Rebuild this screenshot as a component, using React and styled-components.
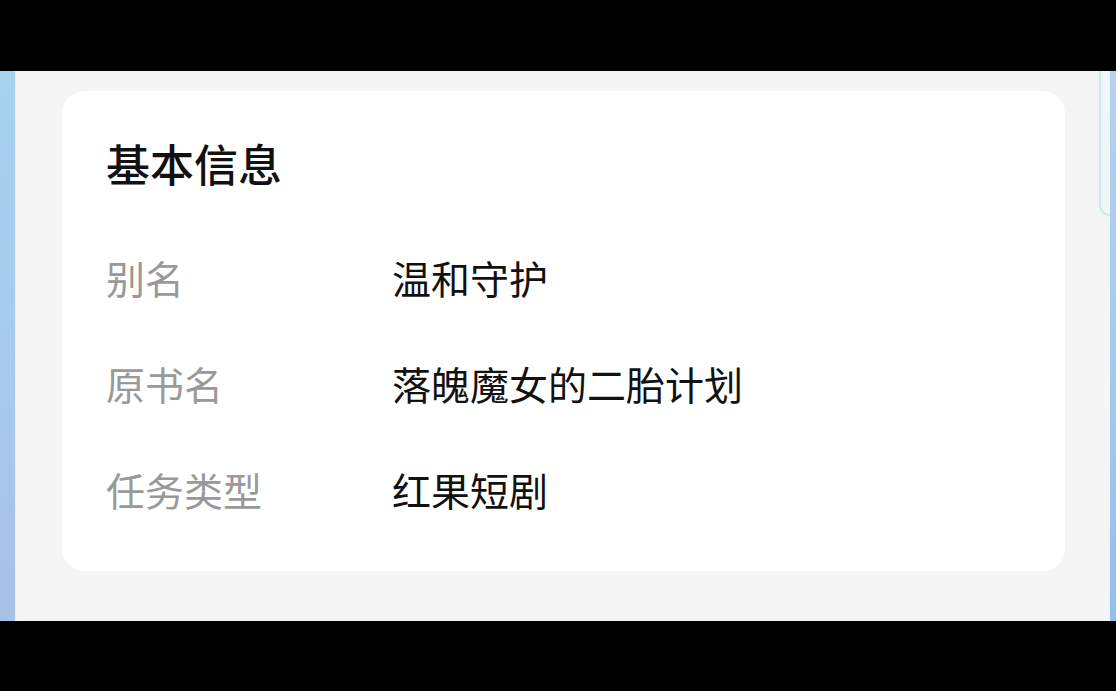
import React from 'react'
import styled, {createGlobalStyle} from 'styled-components'

const GlobalStyle = createGlobalStyle`
  html, body {
    margin: 0;
    padding: 0;
    background: #000;
  }
  body {
    font-family: "Noto Sans CJK SC", "Noto Sans", sans-serif;
  }
`

const rows = [
  {label: '别名', value: '温和守护'},
  {label: '原书名', value: '落魄魔女的二胎计划'},
  {label: '任务类型', value: '红果短剧'}
]

const App = () => {
  return (
    <>
      <GlobalStyle />
      <Frame>
        <Letterbox />
        <Screen>
          <LeftStrip />
          <Main>
            <Card>
              <Title>基本信息</Title>
              {rows.map((row) => (
                <Row key={row.label}>
                  <Label>{row.label}</Label>
                  <Value>{row.value}</Value>
                </Row>
              ))}
            </Card>
          </Main>
          <RightEdge>
            <Rim />
            <BlueStrip />
          </RightEdge>
        </Screen>
        <Letterbox />
      </Frame>
    </>
  )
}

const Frame = styled.div`
  width: 1116px;
  height: 691px;
  display: flex;
  flex-direction: column;
  background: #000;
  overflow: hidden;
`

const Letterbox = styled.div`
  flex: 1;
  background: #000;
`

const Screen = styled.div`
  height: 550px;
  display: flex;
  flex-direction: row;
  background: #f5f5f5;
`

const LeftStrip = styled.div`
  width: 15px;
  background: linear-gradient(180deg, #a6d3ee 0%, #a8c9ea 60%, #a7c0e4 100%);
  border-right: 1px solid #e8f0f6;
`

const Main = styled.div`
  flex: 1;
  padding: 20px 34px 0 46px;
`

const Card = styled.section`
  background: #fff;
  border-radius: 22px;
  height: 480px;
  box-sizing: border-box;
  padding: 39px 45px 0 44px;
`

const Title = styled.h2`
  margin: 0 0 28px 0;
  font-size: 44px;
  line-height: 66px;
  font-weight: 500;
  color: #111;
`

const Row = styled.div`
  display: flex;
  flex-direction: row;
  align-items: center;
  height: 106px;
  font-size: 39px;
`

const Label = styled.span`
  width: 286px;
  flex-shrink: 0;
  color: #999;
`

const Value = styled.span`
  color: #111;
`

const RightEdge = styled.div`
  width: 17px;
  display: flex;
  flex-direction: row;
  align-items: flex-start;
`

const Rim = styled.div`
  flex: 1;
  height: 143px;
  background: #f2f5fa;
  border-left: 2px solid #c9ece9;
  border-bottom: 2px solid #c9ece9;
  border-bottom-left-radius: 14px;
`

const BlueStrip = styled.div`
  width: 6px;
  align-self: stretch;
  background: linear-gradient(180deg, #b3d3f0 0%, #a4cbf0 50%, #8fc0f0 100%);
`

export default App
